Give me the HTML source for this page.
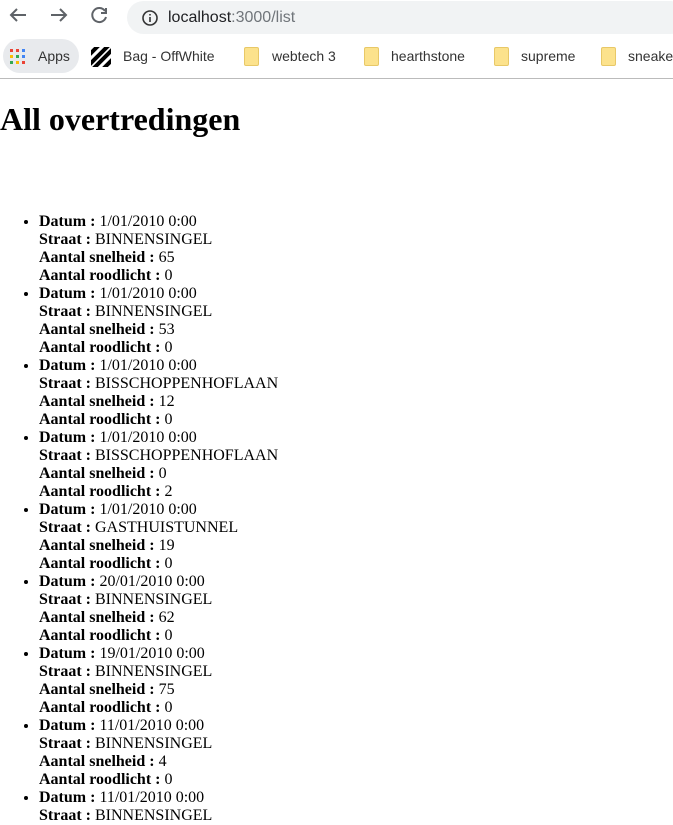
<!DOCTYPE html>
<html><head><style>
body{margin:0;width:673px;height:792px;overflow:hidden;background:#fff;font-family:"Liberation Serif",serif;position:relative}
.tb{position:absolute;left:0;top:0;width:673px;height:38px;background:#fff}
.url{position:absolute;left:127px;top:1px;width:560px;height:33px;border-radius:17px;background:#f1f3f4;font-family:"Liberation Sans",sans-serif;font-size:16px;line-height:33px}
.bm{position:absolute;left:0;top:38px;width:673px;height:40px;background:#fff;border-bottom:1px solid #bbb;font-family:"Liberation Sans",sans-serif;font-size:14px;color:#333}
.bm span{position:absolute;top:10px}
.fold{position:absolute;top:9px;width:13px;height:17px;background:#fce28c;border:1px solid #e8c867;border-radius:2px}
h1{position:absolute;left:0;top:101px;margin:0;font-size:32px;line-height:37px}
ul{position:absolute;left:0;top:213px;margin:0;padding-left:39px;font-size:16px;line-height:18px}
</style></head><body>
<div class="tb">
<svg width="120" height="34" style="position:absolute;left:0;top:0" fill="none" stroke="#5f6368" stroke-width="2">
<path d="M26 15H11M17 9l-6 6 6 6"/><path d="M51 15h15M60 9l6 6-6 6"/>
<path d="M105 11a7 7 0 1 0 1 6"/><path d="M106 8v5h-5"/>
</svg>
<div class="url"><svg width="20" height="20" style="position:absolute;left:13px;top:7px"><circle cx="10" cy="10" r="7" fill="none" stroke="#333" stroke-width="1.6"/><path d="M10 9v5M10 6v1.5" stroke="#333" stroke-width="1.6"/></svg><span style="position:absolute;left:41px;color:#202124">localhost<span style="color:#70757a">:3000/list</span></span></div>
</div>
<div class="bm">
<div style="position:absolute;left:3px;top:1px;width:76px;height:34px;border-radius:17px;background:#e8eaed"></div>
<svg width="18" height="18" style="position:absolute;left:9px;top:10px">
<g><rect x="1" y="1" width="3" height="3" fill="#ea4335"/><rect x="7" y="1" width="3" height="3" fill="#ea4335"/><rect x="13" y="1" width="3" height="3" fill="#4285f4"/><rect x="1" y="7" width="3" height="3" fill="#fbbc05"/><rect x="7" y="7" width="3" height="3" fill="#34a853"/><rect x="13" y="7" width="3" height="3" fill="#4285f4"/><rect x="1" y="13" width="3" height="3" fill="#34a853"/><rect x="7" y="13" width="3" height="3" fill="#fbbc05"/><rect x="13" y="13" width="3" height="3" fill="#ea4335"/></g></svg>
<span style="left:38px">Apps</span>
<svg width="20" height="20" style="position:absolute;left:91px;top:9px"><rect width="20" height="20" fill="#fff"/><path d="M-2 8L8-2M-2 18L18-2M2 22L22 2M12 22L22 12" stroke="#000" stroke-width="4"/></svg>
<span style="left:123px">Bag - OffWhite</span>
<div class="fold" style="left:244px"></div><span style="left:272px">webtech 3</span>
<div class="fold" style="left:364px"></div><span style="left:391px">hearthstone</span>
<div class="fold" style="left:494px"></div><span style="left:521px">supreme</span>
<div class="fold" style="left:601px"></div><span style="left:628px">sneakers</span>
</div>
<h1>All overtredingen</h1>
<ul>
<li><b>Datum :</b> 1/01/2010 0:00<br><b>Straat :</b> BINNENSINGEL<br><b>Aantal snelheid :</b> 65<br><b>Aantal roodlicht :</b> 0</li>
<li><b>Datum :</b> 1/01/2010 0:00<br><b>Straat :</b> BINNENSINGEL<br><b>Aantal snelheid :</b> 53<br><b>Aantal roodlicht :</b> 0</li>
<li><b>Datum :</b> 1/01/2010 0:00<br><b>Straat :</b> BISSCHOPPENHOFLAAN<br><b>Aantal snelheid :</b> 12<br><b>Aantal roodlicht :</b> 0</li>
<li><b>Datum :</b> 1/01/2010 0:00<br><b>Straat :</b> BISSCHOPPENHOFLAAN<br><b>Aantal snelheid :</b> 0<br><b>Aantal roodlicht :</b> 2</li>
<li><b>Datum :</b> 1/01/2010 0:00<br><b>Straat :</b> GASTHUISTUNNEL<br><b>Aantal snelheid :</b> 19<br><b>Aantal roodlicht :</b> 0</li>
<li><b>Datum :</b> 20/01/2010 0:00<br><b>Straat :</b> BINNENSINGEL<br><b>Aantal snelheid :</b> 62<br><b>Aantal roodlicht :</b> 0</li>
<li><b>Datum :</b> 19/01/2010 0:00<br><b>Straat :</b> BINNENSINGEL<br><b>Aantal snelheid :</b> 75<br><b>Aantal roodlicht :</b> 0</li>
<li><b>Datum :</b> 11/01/2010 0:00<br><b>Straat :</b> BINNENSINGEL<br><b>Aantal snelheid :</b> 4<br><b>Aantal roodlicht :</b> 0</li>
<li><b>Datum :</b> 11/01/2010 0:00<br><b>Straat :</b> BINNENSINGEL</li>
</ul>
</body></html>
